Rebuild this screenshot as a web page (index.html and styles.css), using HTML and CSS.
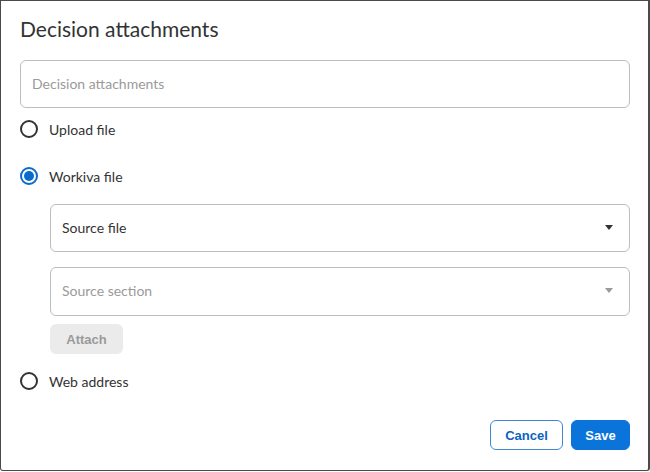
FILE: index.html
```html
<!DOCTYPE html>
<html>
<head>
<meta charset="utf-8">
<link rel="stylesheet" href="styles.css">
</head>
<body>
<div class="dialog">
  <h1 class="title">Decision attachments</h1>
  <div class="field field-main"><span class="placeholder">Decision attachments</span></div>
  <div class="radio-row row-upload"><span class="radio"></span><span class="label">Upload file</span></div>
  <div class="radio-row row-workiva"><span class="radio checked"></span><span class="label">Workiva file</span></div>
  <div class="sub">
    <div class="field select"><span class="value">Source file</span><span class="caret"></span></div>
    <div class="field select select-2"><span class="placeholder">Source section</span><span class="caret caret-dim"></span></div>
    <button class="btn-attach">Attach</button>
  </div>
  <div class="radio-row row-web"><span class="radio"></span><span class="label">Web address</span></div>
  <div class="footer">
    <button class="btn btn-cancel">Cancel</button>
    <button class="btn btn-save">Save</button>
  </div>
</div>
</body>
</html>
```
FILE: styles.css
```css
html, body { margin: 0; padding: 0; background: #fff; }
body { font-family: Lato, "Noto Sans", sans-serif; color: #333; }
.dialog {
  box-sizing: border-box;
  width: 650px;
  height: 471px;
  border: 1px solid #4a4a4a;
  border-right-width: 2px;
  border-radius: 0 0 3px 3px;
  padding: 15px 18px 0 19px;
  display: flex;
  flex-direction: column;
}
.title {
  margin: 0;
  font-size: 21px;
  line-height: 25px;
  font-weight: 400;
  color: #333;
}
.field {
  box-sizing: border-box;
  border: 1px solid #bdbdbd;
  border-radius: 6px;
  background: #fff;
  display: flex;
  align-items: center;
  padding: 0 11px 2px;
  font-size: 14px;
}
.field-main { height: 48px; margin-top: 19px; }
.placeholder { color: #9a9a9a; }
.value { color: #333; }
.radio-row {
  display: flex;
  align-items: center;
  height: 24px;
  font-size: 14px;
}
.row-upload { margin-top: 9px; }
.row-workiva { margin-top: 23px; }
.row-web { margin-top: 15px; }
.radio {
  box-sizing: border-box;
  width: 18px;
  height: 18px;
  border: 2px solid #333;
  border-radius: 50%;
  margin-right: 11px;
  display: flex;
  align-items: center;
  justify-content: center;
}
.radio.checked { border-color: #0a6bcc; }
.radio.checked::after {
  content: "";
  width: 10px;
  height: 10px;
  border-radius: 50%;
  background: #0a6bcc;
}
.label { color: #333; }
.sub {
  margin-left: 30px;
  margin-top: 16px;
  display: flex;
  flex-direction: column;
  align-items: flex-start;
}
.select { width: 100%; height: 48px; justify-content: space-between; }
.select-2 { margin-top: 15px; height: 49px; }
.caret {
  width: 0;
  height: 0;
  border-left: 4px solid transparent;
  border-right: 4px solid transparent;
  border-top: 5px solid #333;
  margin-right: 5px;
}
.caret-dim { border-top-color: #9a9a9a; }
.btn-attach {
  margin-top: 8px;
  width: 73px;
  height: 30px;
  border: 0;
  border-radius: 6px;
  background: #ebebeb;
  color: #9a9a9a;
  font-family: "Liberation Sans", Arial, sans-serif;
  font-weight: 700;
  font-size: 13px;
  padding: 0;
}
.footer {
  margin-top: 27px;
  display: flex;
  justify-content: flex-end;
  gap: 8px;
}
.btn {
  box-sizing: border-box;
  height: 30px;
  border-radius: 6px;
  font-family: "Liberation Sans", Arial, sans-serif;
  font-weight: 700;
  font-size: 13px;
  padding: 0;
}
.btn-cancel {
  width: 73px;
  background: #fff;
  border: 1px solid #3f87d4;
  color: #0b63bf;
}
.btn-save {
  width: 59px;
  background: #0b74db;
  border: 1px solid #0b74db;
  color: #fff;
}
```
